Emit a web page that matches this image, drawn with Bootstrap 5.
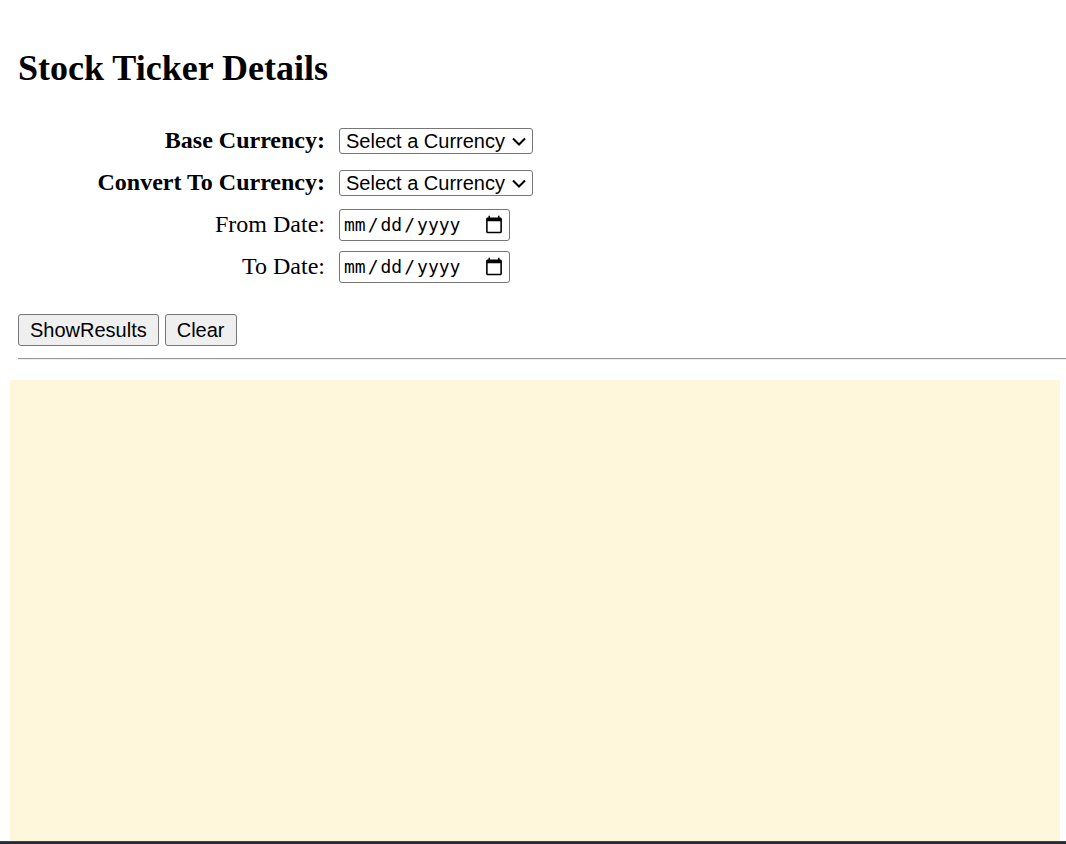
<!DOCTYPE html>
<html lang="en">
<head>
<meta charset="utf-8">
<meta name="viewport" content="width=device-width, initial-scale=1">
<title>Stock Ticker Details</title>
<link rel="stylesheet" href="https://cdn.jsdelivr.net/npm/bootstrap@5.3.0/dist/css/bootstrap.min.css">
<style>
body { font-family: "Liberation Serif", serif; font-size: 24px; line-height: 30px; color: #000; background: #fff; }
.page-title { font-size: 36px; line-height: 42px; margin: 0 0 36px; }
.ticker-area { padding: 47px 0 0 18px; }
.ticker-grid { display: grid; grid-template-columns: 307px auto; column-gap: 14px; row-gap: 10px; justify-content: start; align-items: center; }
.ticker-grid label { padding-bottom: 2px; text-align: right; white-space: nowrap; }
.plain-select { appearance: none; width: 194px; height: 26px; padding: 0 26px 0 6px; border: 1px solid #767676; border-radius: 3px; color: #000; font: 20px/24px "Liberation Sans", sans-serif;
  background: #fff url("data:image/svg+xml,%3Csvg xmlns='http://www.w3.org/2000/svg' viewBox='0 0 14 9'%3E%3Cpath d='M1 1.5l6 6 6-6' fill='none' stroke='%23000' stroke-width='2'/%3E%3C/svg%3E") no-repeat right 6px center / 14px 9px; }
.plain-date { width: 171px; height: 32px; padding: 1px 5px 1px 4px; border: 1px solid #767676; border-radius: 3px; background: #fff; color: #000; font: 18px/28px "DejaVu Sans Mono", monospace; }
.plain-date::-webkit-datetime-edit-text { padding: 0 2px; }
.plain-date::-webkit-calendar-picker-indicator { width: 20px; height: 20px; padding: 0; }
.form-actions { gap: 6px; margin-top: 31px; }
.plain-btn { height: 32px; padding: 0 11px; border: 1px solid #767676; border-radius: 3px; background: #efefef; color: #000; font: 20px/28px "Liberation Sans", sans-serif; }
.rule { height: 2px; margin: 12px 0 20px; border: 0; border-top: 1px solid #999; border-bottom: 1px solid #eee; opacity: 1; }
.results { margin: 0 6px 0 10px; background: #fff7dc; }
.page-foot { height: 3px; background: #202d3b; border-top: 1px solid #34474f; }
</style>
</head>
<body>
<div class="d-flex flex-column min-vh-100">
  <main class="d-flex flex-column flex-grow-1">
    <form class="ticker-area">
      <h1 class="page-title fw-bold">Stock Ticker Details</h1>
      <div class="ticker-grid">
        <label class="fw-bold" for="base">Base Currency:</label>
        <select class="plain-select" id="base"><option>Select a Currency</option></select>
        <label class="fw-bold" for="target">Convert To Currency:</label>
        <select class="plain-select" id="target"><option>Select a Currency</option></select>
        <label for="from">From Date:</label>
        <input class="plain-date" type="date" id="from">
        <label for="to">To Date:</label>
        <input class="plain-date" type="date" id="to">
      </div>
      <div class="d-flex form-actions">
        <button class="plain-btn" type="button">ShowResults</button>
        <button class="plain-btn" type="reset">Clear</button>
      </div>
      <hr class="rule">
    </form>
    <section class="results flex-grow-1" aria-label="Results"></section>
  </main>
  <footer class="page-foot"></footer>
</div>
<script src="https://cdn.jsdelivr.net/npm/bootstrap@5.3.0/dist/js/bootstrap.bundle.min.js"></script>
</body>
</html>
